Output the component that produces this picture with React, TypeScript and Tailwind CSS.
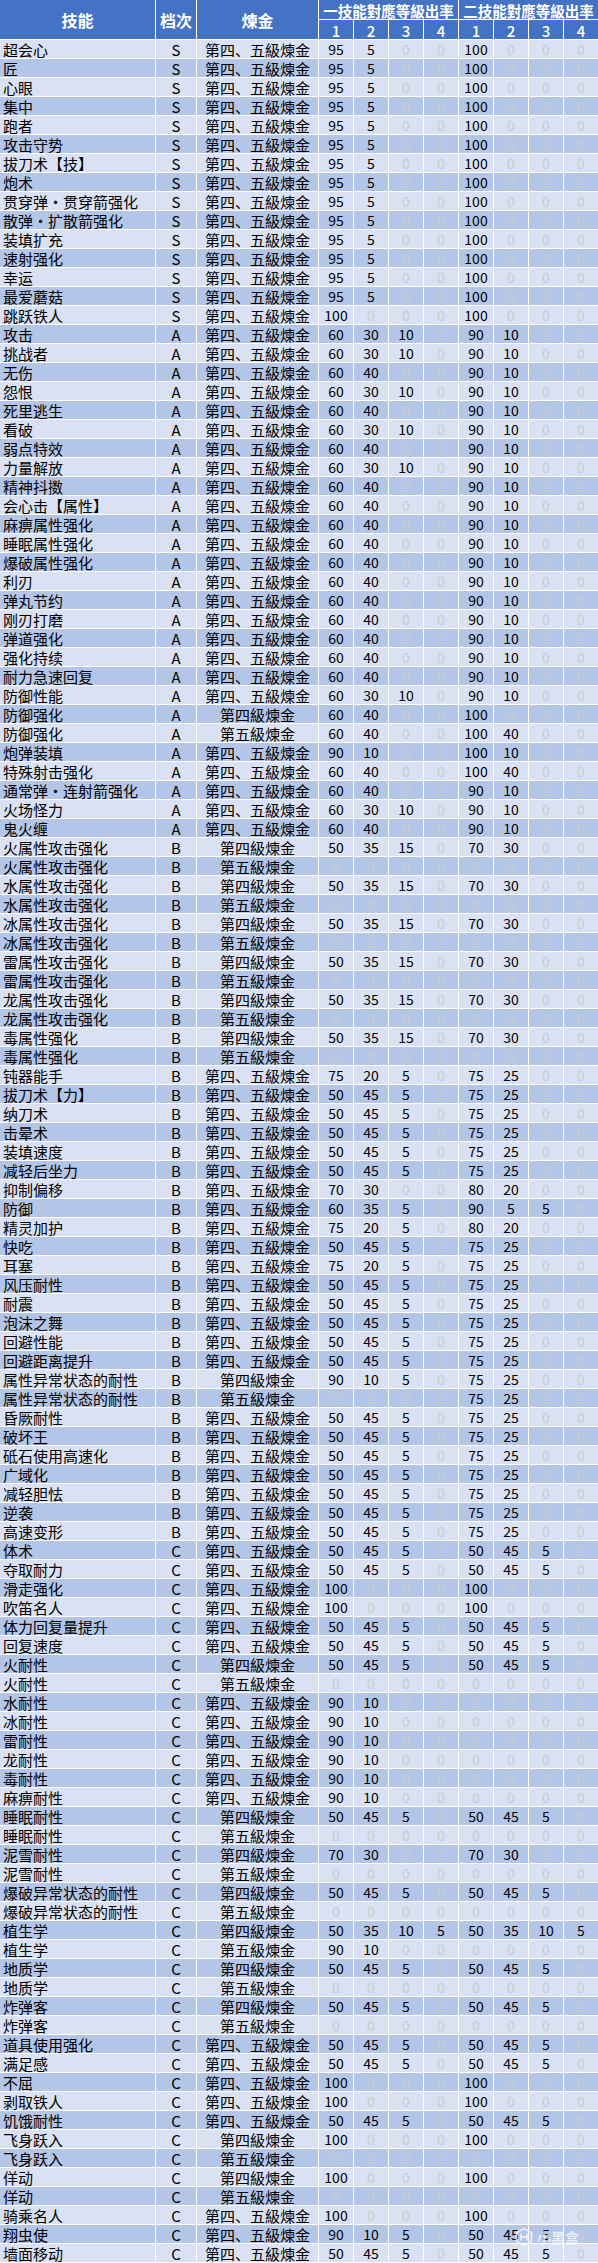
import React from "react";

const ALCH: Record<string, string> = {
  F: "第四、五級煉金",
  "4": "第四級煉金",
  "5": "第五級煉金",
};

const S95 = "95,5,0,0,100,0,0,0";
const A1 = "60,30,10,0,90,10,0,0";
const A2 = "60,40,0,0,90,10,0,0";
const E4 = "50,35,15,0,70,30,0,0";
const Z = "0,0,0,0,0,0,0,0";
const B1 = "50,45,5,0,75,25,0,0";
const C1 = "50,45,5,0,50,45,5,0";
const H = "100,0,0,0,100,0,0,0";
const R = "90,10,0,0,0,0,0,0";

const raw: string[] = [
  `超会心|S|F|${S95}`,
  `匠|S|F|${S95}`,
  `心眼|S|F|${S95}`,
  `集中|S|F|${S95}`,
  `跑者|S|F|${S95}`,
  `攻击守势|S|F|${S95}`,
  `拔刀术【技】|S|F|${S95}`,
  `炮术|S|F|${S95}`,
  `贯穿弹・贯穿箭强化|S|F|${S95}`,
  `散弹・扩散箭强化|S|F|${S95}`,
  `装填扩充|S|F|${S95}`,
  `速射强化|S|F|${S95}`,
  `幸运|S|F|${S95}`,
  `最爱蘑菇|S|F|${S95}`,
  `跳跃铁人|S|F|${H}`,
  `攻击|A|F|${A1}`,
  `挑战者|A|F|${A1}`,
  `无伤|A|F|${A2}`,
  `怨恨|A|F|${A1}`,
  `死里逃生|A|F|${A2}`,
  `看破|A|F|${A1}`,
  `弱点特效|A|F|${A2}`,
  `力量解放|A|F|${A1}`,
  `精神抖擞|A|F|${A2}`,
  `会心击【属性】|A|F|${A2}`,
  `麻痹属性强化|A|F|${A2}`,
  `睡眠属性强化|A|F|${A2}`,
  `爆破属性强化|A|F|${A2}`,
  `利刃|A|F|${A2}`,
  `弹丸节约|A|F|${A2}`,
  `刚刃打磨|A|F|${A2}`,
  `弹道强化|A|F|${A2}`,
  `强化持续|A|F|${A2}`,
  `耐力急速回复|A|F|${A2}`,
  `防御性能|A|F|${A1}`,
  `防御强化|A|4|60,40,0,0,100,0,0,0`,
  `防御强化|A|5|60,40,0,0,100,40,0,0`,
  `炮弹装填|A|F|90,10,0,0,100,10,0,0`,
  `特殊射击强化|A|F|60,40,0,0,100,40,0,0`,
  `通常弹・连射箭强化|A|F|${A2}`,
  `火场怪力|A|F|${A1}`,
  `鬼火缠|A|F|${A2}`,
  `火属性攻击强化|B|4|${E4}`,
  `火属性攻击强化|B|5|${Z}`,
  `水属性攻击强化|B|4|${E4}`,
  `水属性攻击强化|B|5|${Z}`,
  `冰属性攻击强化|B|4|${E4}`,
  `冰属性攻击强化|B|5|${Z}`,
  `雷属性攻击强化|B|4|${E4}`,
  `雷属性攻击强化|B|5|${Z}`,
  `龙属性攻击强化|B|4|${E4}`,
  `龙属性攻击强化|B|5|${Z}`,
  `毒属性强化|B|4|${E4}`,
  `毒属性强化|B|5|${Z}`,
  `钝器能手|B|F|75,20,5,0,75,25,0,0`,
  `拔刀术【力】|B|F|${B1}`,
  `纳刀术|B|F|${B1}`,
  `击晕术|B|F|${B1}`,
  `装填速度|B|F|${B1}`,
  `减轻后坐力|B|F|${B1}`,
  `抑制偏移|B|F|70,30,0,0,80,20,0,0`,
  `防御|B|F|60,35,5,0,90,5,5,0`,
  `精灵加护|B|F|75,20,5,0,80,20,0,0`,
  `快吃|B|F|${B1}`,
  `耳塞|B|F|75,20,5,0,75,25,0,0`,
  `风压耐性|B|F|${B1}`,
  `耐震|B|F|${B1}`,
  `泡沫之舞|B|F|${B1}`,
  `回避性能|B|F|${B1}`,
  `回避距离提升|B|F|${B1}`,
  `属性异常状态的耐性|B|4|90,10,5,0,75,25,0,0`,
  `属性异常状态的耐性|B|5|0,0,0,0,75,25,0,0`,
  `昏厥耐性|B|F|${B1}`,
  `破坏王|B|F|${B1}`,
  `砥石使用高速化|B|F|${B1}`,
  `广域化|B|F|${B1}`,
  `减轻胆怯|B|F|${B1}`,
  `逆袭|B|F|${B1}`,
  `高速变形|B|F|${B1}`,
  `体术|C|F|${C1}`,
  `夺取耐力|C|F|${C1}`,
  `滑走强化|C|F|${H}`,
  `吹笛名人|C|F|${H}`,
  `体力回复量提升|C|F|${C1}`,
  `回复速度|C|F|${C1}`,
  `火耐性|C|4|${C1}`,
  `火耐性|C|5|${Z}`,
  `水耐性|C|F|${R}`,
  `冰耐性|C|F|${R}`,
  `雷耐性|C|F|${R}`,
  `龙耐性|C|F|${R}`,
  `毒耐性|C|F|${R}`,
  `麻痹耐性|C|F|${R}`,
  `睡眠耐性|C|4|${C1}`,
  `睡眠耐性|C|5|${Z}`,
  `泥雪耐性|C|4|70,30,0,0,70,30,0,0`,
  `泥雪耐性|C|5|${Z}`,
  `爆破异常状态的耐性|C|4|${C1}`,
  `爆破异常状态的耐性|C|5|${Z}`,
  `植生学|C|4|50,35,10,5,50,35,10,5`,
  `植生学|C|5|${R}`,
  `地质学|C|4|${C1}`,
  `地质学|C|5|${Z}`,
  `炸弹客|C|4|${C1}`,
  `炸弹客|C|5|${Z}`,
  `道具使用强化|C|F|${C1}`,
  `满足感|C|F|${C1}`,
  `不屈|C|F|${H}`,
  `剥取铁人|C|F|${H}`,
  `饥饿耐性|C|F|${C1}`,
  `飞身跃入|C|4|${H}`,
  `飞身跃入|C|5|${Z}`,
  `佯动|C|4|${H}`,
  `佯动|C|5|${Z}`,
  `骑乘名人|C|F|${H}`,
  `翔虫使|C|F|90,10,5,0,50,45,5,0`,
  `墙面移动|C|F|${C1}`,
];

const rows = raw.map((r) => {
  const [name, grade, a, vals] = r.split("|");
  return { name, grade, alch: ALCH[a], vals: vals.split(",") };
});

const GRID = "grid grid-cols-[155px_40px_121px_repeat(8,34px)] gap-px";

export default function App() {
  return (
    <div className="relative w-[598px] bg-white pb-px font-['Noto_Sans_CJK_SC',sans-serif] text-black">
      <div className="flex flex-col gap-px">
        {/* header */}
        <div className={`${GRID} grid-rows-[19px_19px] bg-white text-white`}>
          <div className="row-span-2 flex items-center justify-center bg-[#4472C4] text-[16px] font-bold leading-[20px]">
            技能
          </div>
          <div className="row-span-2 flex items-center justify-center bg-[#4472C4] text-[16px] font-bold leading-[20px]">
            档次
          </div>
          <div className="row-span-2 flex items-center justify-center bg-[#4472C4] text-[16px] font-bold leading-[20px]">
            煉金
          </div>
          <div className="col-span-4 flex items-end justify-center bg-[#4472C4] text-[14.5px] font-bold leading-[17px] whitespace-nowrap">
            一技能對應等級出率
          </div>
          <div className="col-span-4 flex items-end justify-center bg-[#4472C4] text-[14.5px] font-bold leading-[17px] whitespace-nowrap">
            二技能對應等級出率
          </div>
          {["1", "2", "3", "4", "1", "2", "3", "4"].map((n, i) => (
            <div
              key={i}
              className="flex items-end justify-center bg-[#4472C4] text-[15px] font-medium leading-[17px]"
            >
              {n}
            </div>
          ))}
        </div>

        {rows.map((row, i) => {
          const bg = i % 2 === 0 ? "bg-[#D9E1F2]" : "bg-[#B4C6E7]";
          return (
            <div key={i} className={`${GRID} h-[18px]`}>
              <div className={`${bg} flex items-end pl-[3px] text-[15px] leading-[17px] whitespace-nowrap`}>
                {row.name}
              </div>
              <div className={`${bg} flex items-end justify-center text-[15px] leading-[17px]`}>
                {row.grade}
              </div>
              <div className={`${bg} flex items-end justify-center text-[15px] leading-[17px] whitespace-nowrap`}>
                {row.alch}
              </div>
              {row.vals.map((v, j) => (
                <div
                  key={j}
                  className={`${bg} flex items-end justify-center text-[14px] leading-[17px] ${
                    v === "0" ? "text-[#CBCBCB]" : "text-black"
                  }`}
                >
                  {v}
                </div>
              ))}
            </div>
          );
        })}
      </div>

      {/* watermark */}
      <div className="pointer-events-none absolute left-[514px] top-[2227px] flex items-center gap-[3px] opacity-70">
        <svg width="20" height="20" viewBox="0 0 20 20" fill="none">
          <path
            d="M10 1.5 L17.5 5.8 V14.2 L10 18.5 L2.5 14.2 V5.8 Z"
            stroke="white"
            strokeWidth="1.8"
            strokeLinejoin="round"
          />
          <path d="M7 6.5 V13.5 M13 6.5 V13.5 M7 10 H13" stroke="white" strokeWidth="1.8" />
        </svg>
        <span className="text-[14px] leading-none font-bold text-white">小黑盒</span>
      </div>
    </div>
  );
}
